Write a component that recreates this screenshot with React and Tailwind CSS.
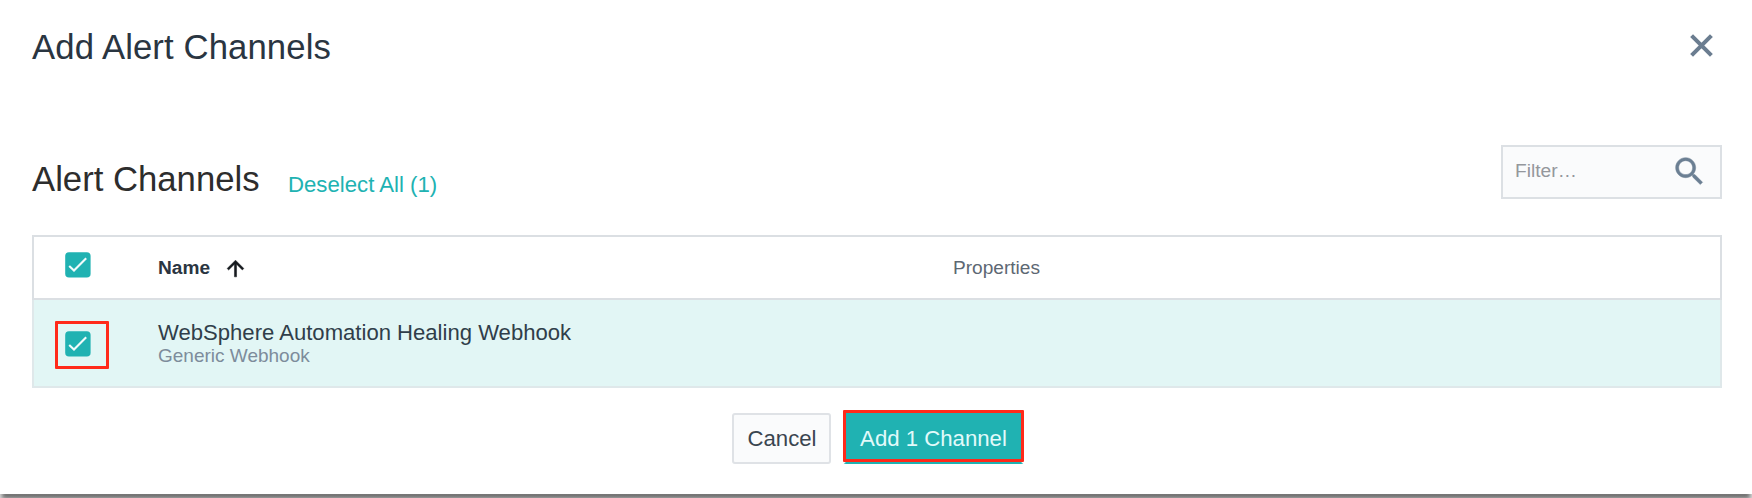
function Checkbox() {
  return (
    <svg viewBox="0 0 26 26" className="block size-[26px] shrink-0" role="checkbox" aria-checked="true">
      <rect x="0.2" y="0.2" width="25.4" height="25.4" rx="3.8" fill="#20b2b2" />
      <path d="M4.2 13.9 9 18.6 21.2 6.3" fill="none" stroke="#f1fbfb" strokeWidth="2.1" />
    </svg>
  );
}

function CloseIcon() {
  return (
    <svg viewBox="0 0 24 24" className="size-[39px]" fill="none" stroke="#6b7d90" strokeWidth="2.5">
      <path d="M5.9 5.9 18.1 18.1M18.1 5.9 5.9 18.1" />
    </svg>
  );
}

function SearchIcon() {
  return (
    <svg viewBox="0 0 24 24" className="size-[37px]" fill="#6b7f93" stroke="#6b7f93" strokeWidth="0.3">
      <path d="M15.5 14h-.79l-.28-.27C15.41 12.59 16 11.11 16 9.5 16 5.91 13.09 3 9.5 3S3 5.91 3 9.5 5.91 16 9.5 16c1.61 0 3.09-.59 4.23-1.57l.27.28v.79l5 4.99L20.49 19l-4.99-5zm-6 0C7.01 14 5 11.99 5 9.5S7.01 5 9.5 5 14 7.01 14 9.5 11.99 14 9.5 14z" />
    </svg>
  );
}

function SortIcon() {
  return (
    <svg viewBox="0 0 24 24" className="size-[25px]" fill="#15191d" stroke="#15191d" strokeWidth="0.5">
      <path d="m4 12 1.41 1.41L11 7.83V20h2V7.83l5.58 5.59L20 12l-8-8-8 8z" />
    </svg>
  );
}

export default function App() {
  return (
    <div className="flex h-[498px] w-[1752px] flex-col overflow-hidden bg-white font-['Liberation_Sans',Arial,sans-serif] whitespace-nowrap">
      <header className="flex h-[92px] shrink-0 items-start justify-between pt-[26px] pr-[31px] pl-8">
        <h1 className="pt-px text-[34.7px] leading-10 tracking-[0.11px] text-[#2a3541]">Add Alert Channels</h1>
        <button className="block" aria-label="Close"><CloseIcon /></button>
      </header>

      <section className="flex h-[143px] shrink-0 items-start justify-between pt-[53px] pr-[30px] pl-8">
        <div className="flex items-baseline pt-[14px]">
          <h2 className="w-[256px] text-[34.7px] leading-10 text-[#2d2d2d]">Alert Channels</h2>
          <button className="translate-y-px text-[22.2px] leading-6 text-[#20b2b2]">Deselect All (1)</button>
        </div>
        <div className="flex h-[54px] w-[221px] items-center justify-between border-2 border-[#dce0e4] bg-[#fafbfc] pr-[12px] pb-[2px] pl-[12px]">
          <span className="text-[19.2px] leading-6 text-[#94979c]">Filter…</span>
          <SearchIcon />
        </div>
      </section>

      <div className="mr-[30px] ml-8 flex shrink-0 flex-col">
        <div className="flex h-[65px] items-start border-2 border-[#dbdfe3]">
          <div className="w-[124px] pt-[15px] pl-[31px]"><Checkbox /></div>
          <div className="flex w-[795px] items-center pt-[18px]">
            <span className="w-[65px] text-[19.1px] leading-[26px] font-bold text-[#2a3541]">Name</span>
            <SortIcon />
          </div>
          <span className="pt-[18px] text-[19.1px] leading-[26px] text-[#5d6873]">Properties</span>
        </div>
        <div className="flex h-[88px] items-start border-2 border-t-0 border-[#dfe8ea] bg-[#e2f6f5]">
          <div className="w-[124px] pt-[21px] pl-[21px]">
            <div className="flex h-12 w-[54px] items-start rounded-[1px] border-3 border-[#ff2a1a] pt-[7px] pl-[7px]">
              <Checkbox />
            </div>
          </div>
          <div className="pt-[20px]">
            <div className="text-[22.1px] leading-[26px] text-[#303e4a]">WebSphere Automation Healing Webhook</div>
            <div className="text-[19px] leading-[20px] text-[#7d8c9b]">Generic Webhook</div>
          </div>
        </div>
      </div>

      <footer className="flex h-[106px] shrink-0 items-start pt-[22px] pl-[732px]">
        <button className="mt-[3px] mr-3 h-[51px] w-[99px] rounded-[3px] border-2 border-[#dfe2e6] bg-[#fafbfc] pl-px text-[22.2px] leading-6 text-[#3a4550]">Cancel</button>
        <button className="h-[54px] w-[181px] rounded-[3px] border-x-3 border-b-2 border-x-transparent border-b-[#20b2b2]">
          <span className="-mx-[3px] flex h-[52px] items-center justify-center rounded-[1px] border-3 border-[#ff2a1a] bg-[#20b2b2] pt-[5px] text-[22.2px] leading-6 text-[#e2fafa]">Add 1 Channel</span>
        </button>
      </footer>

      <div className="h-1 shrink-0 bg-linear-to-b from-[#666] to-[#8c8c8c] shadow-[inset_5px_0_4px_-3px_#ddd,inset_-5px_0_4px_-3px_#ddd]" />
    </div>
  );
}
